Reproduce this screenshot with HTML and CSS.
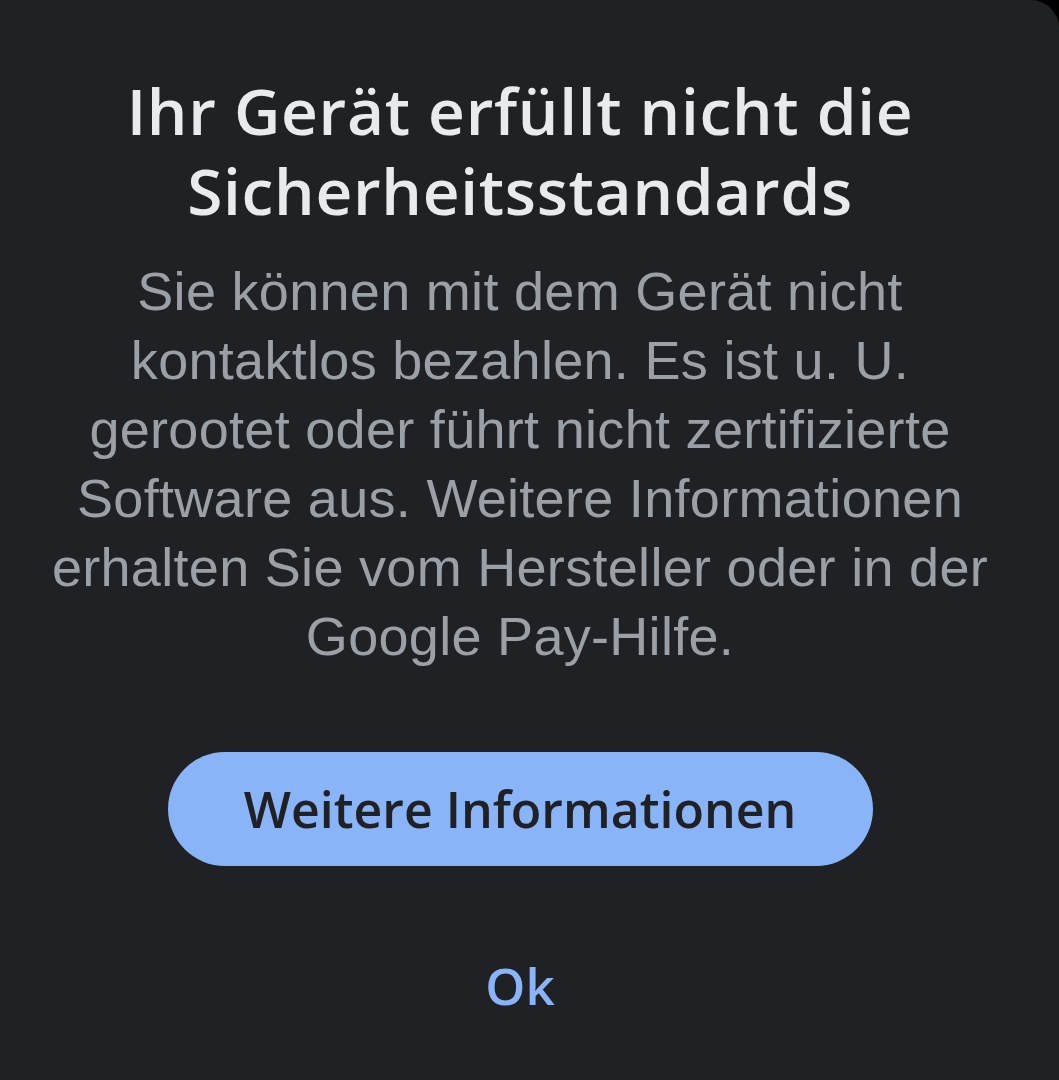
FILE: index.html
```html
<!DOCTYPE html>
<html>
<head>
<meta name="viewport" content="width=device-width, initial-scale=1">
<link rel="stylesheet" href="styles.css">
</head>
<body>

<div class="dialog">

  <h1 class="title">Ihr Gerät erfüllt nicht die<br>Sicherheitsstandards</h1>

  <p class="message">Sie können mit dem Gerät nicht<br>kontaktlos bezahlen. Es ist u. U.<br>gerootet oder führt nicht zertifizierte<br>Software aus. Weitere Informationen<br>erhalten Sie vom Hersteller oder in der<br>Google Pay-Hilfe.</p>

  <button class="btn-primary">Weitere Informationen</button>

  <button class="btn-text">Ok</button>

</div>

</body>
</html>
```

FILE: styles.css
```css
html, body {
  margin: 0;
  height: 100%;
  background-color: #000;
}

/* The dialog sheet */
.dialog {
  box-sizing: border-box;
  height: 100%;
  background-color: #202124;
  border-top-right-radius: 28px;
  padding: 71px 19px 0 0;
  display: flex;
  flex-direction: column;
  align-items: center;
  text-align: center;
}

.title {
  margin: 0;
  font-family: "Open Sans", sans-serif;
  font-weight: 600;
  font-size: 64px;
  line-height: 80px;
  letter-spacing: 0.7px;
  color: #e8eaed;
}

.message {
  margin: 26px 0 0 0;
  font-family: "Liberation Sans", Arial, sans-serif;
  font-size: 54px;
  line-height: 69px;
  letter-spacing: 0.3px;
  color: #9aa0a6;
}

button {
  font-family: "Open Sans", sans-serif;
  font-weight: 600;
  border: none;
  cursor: pointer;
  padding: 0;
}

.btn-primary {
  margin-top: 81px;
  width: 705px;
  height: 114px;
  border-radius: 57px;
  background-color: #8ab4f8;
  color: #202124;
  font-size: 50px;
}

.btn-text {
  margin-top: 89px;
  background: none;
  color: #8ab4f8;
  font-size: 51px;
  line-height: 60px;
}
```
